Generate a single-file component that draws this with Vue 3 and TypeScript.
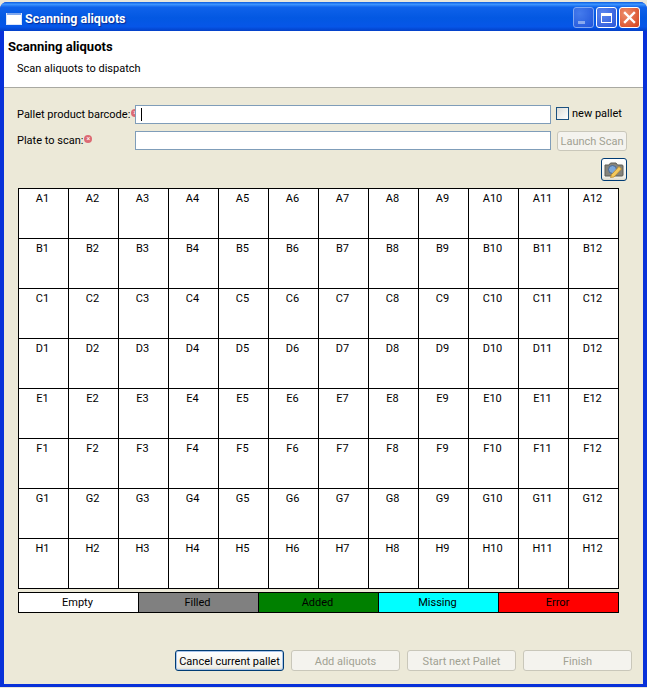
<script setup lang="ts">
const rows = ['A', 'B', 'C', 'D', 'E', 'F', 'G', 'H'];
const cols = [1, 2, 3, 4, 5, 6, 7, 8, 9, 10, 11, 12];
const wells = rows.flatMap((r) => cols.map((c) => `${r}${c}`));

const legend = [
  { label: 'Empty', color: '#ffffff' },
  { label: 'Filled', color: '#808080' },
  { label: 'Added', color: '#008000' },
  { label: 'Missing', color: '#00ffff' },
  { label: 'Error', color: '#ff0000' },
];
</script>

<template>
  <div class="window">
    <div class="titlebar">
      <svg class="app-icon" width="16" height="12" viewBox="0 0 16 12">
        <rect x="0.5" y="0.5" width="15" height="11" fill="#fff" stroke="#dbe6fa" />
        <rect x="1" y="0" width="14" height="2" fill="#7fa8ee" />
      </svg>
      <span class="title">Scanning aliquots</span>
      <div class="controls">
        <div class="ctl min"><span class="min-bar"></span></div>
        <div class="ctl max"><span class="max-box"></span></div>
        <div class="ctl close">
          <svg width="13" height="13" viewBox="0 0 13 13">
            <path d="M2 2 L11 11 M11 2 L2 11" stroke="#fff" stroke-width="2.4" stroke-linecap="square" />
          </svg>
        </div>
      </div>
    </div>

    <div class="body">
      <header class="banner">
        <h1>Scanning aliquots</h1>
        <p>Scan aliquots to dispatch</p>
      </header>

      <main class="content">
        <div class="form-row first">
          <label class="field-label">Pallet product barcode:<span class="req">×</span></label>
          <div class="input"><span class="caret"></span></div>
          <div class="check">
            <span class="box"></span>
            <span>new pallet</span>
          </div>
        </div>
        <div class="form-row second">
          <label class="field-label">Plate to scan:<span class="req">×</span></label>
          <div class="input"></div>
          <button class="btn launch" disabled>Launch Scan</button>
        </div>
        <div class="tool-row">
          <button class="btn tool">
            <svg width="20" height="18" viewBox="0 0 20 18">
              <path d="M1 4 H5 L6.5 2 H12 L13.5 4 H18 Q19 4 19 5 V14 Q19 15 18 15 H1 Z" fill="#85847c" stroke="#5f5e58" />
              <circle cx="8.5" cy="8.5" r="4" fill="#7ba6d8" stroke="#4a678f" />
              <path d="M6.5 16.5 L7.5 13.5 L15 5.5 L17.5 8 L10 16 Z" fill="#f4c95c" stroke="#b98a30" stroke-width="0.8" />
            </svg>
          </button>
        </div>

        <div class="plate">
          <div v-for="w in wells" :key="w" class="well">{{ w }}</div>
        </div>

        <div class="legend">
          <div
            v-for="item in legend"
            :key="item.label"
            class="legend-item"
            :style="{ background: item.color }"
          >
            {{ item.label }}
          </div>
        </div>

        <div class="actions">
          <button class="btn action default">Cancel current pallet</button>
          <button class="btn action" disabled>Add aliquots</button>
          <button class="btn action" disabled>Start next Pallet</button>
          <button class="btn action" disabled>Finish</button>
        </div>
      </main>
    </div>
  </div>
</template>

<style>
html,
body {
  margin: 0;
  background: #e8e6da;
}
</style>

<style scoped>
.window {
  width: 647px;
  height: 685px;
  margin-top: 2px;
  box-sizing: border-box;
  display: flex;
  flex-direction: column;
  background: #0831d9;
  border-radius: 7px 7px 0 0;
  font-family: Roboto, "Noto Sans", sans-serif;
  font-size: 11px;
  color: #000;
  overflow: hidden;
}

.titlebar {
  height: 29px;
  flex: none;
  box-sizing: border-box;
  display: flex;
  align-items: center;
  padding: 2px 7px 0 6px;
  background: linear-gradient(180deg, #0a5be0 0%, #3d95ff 8%, #0f62ea 18%, #0358e2 55%, #0656e8 85%, #0340c8 100%);
}

.app-icon {
  margin-right: 3px;
  margin-top: 2px;
}

.title {
  color: #fff;
  font-weight: 700;
  font-size: 12.5px;
  margin-top: 1px;
  text-shadow: 1px 1px 1px #0a2a90;
}

.controls {
  margin-left: auto;
  display: flex;
  gap: 2px;
}

.ctl {
  width: 21px;
  height: 21px;
  box-sizing: border-box;
  border: 1px solid #fff;
  border-radius: 3px;
  display: flex;
  align-items: center;
  justify-content: center;
  background: radial-gradient(circle at 30% 30%, #5a86ee, #2a55d8);
  position: relative;
}

.ctl.min {
  opacity: 0.75;
  border-color: #a9c0f4;
}

.min-bar {
  position: absolute;
  left: 4px;
  bottom: 3px;
  width: 7px;
  height: 3px;
  background: #b6c4f2;
}

.max-box {
  width: 11px;
  height: 10px;
  box-sizing: border-box;
  border: 1px solid #fff;
  border-top-width: 3px;
}

.ctl.close {
  background: radial-gradient(circle at 30% 30%, #ee8f6c, #d5421e);
}

.body {
  flex: 1;
  margin: 0 4px 3px;
  display: flex;
  flex-direction: column;
  background: #ece9d8;
}

.banner {
  height: 57px;
  flex: none;
  box-sizing: border-box;
  background: #fff;
  border-bottom: 1px solid #a9a9a2;
  padding: 8px 0 0 4px;
}

.banner h1 {
  margin: 0;
  font-size: 13px;
  font-weight: 700;
  line-height: 15px;
}

.banner p {
  margin: 7px 0 0 9px;
  line-height: 15px;
}

.content {
  flex: 1;
  display: flex;
  flex-direction: column;
  padding: 17px 15px 0 14px;
}

.form-row {
  display: flex;
  align-items: flex-start;
}

.form-row.second {
  margin-top: 7px;
}

.field-label {
  width: 118px;
  margin-left: -1px;
  flex: none;
  white-space: nowrap;
  line-height: 19px;
}

.form-row.second .field-label {
  line-height: 20px;
}

.req {
  display: inline-block;
  width: 8px;
  height: 8px;
  margin-left: 1px;
  border-radius: 50%;
  background: #dc6a73;
  color: #fff;
  font-size: 7px;
  line-height: 8px;
  text-align: center;
  vertical-align: 3px;
}

.input {
  width: 416px;
  height: 19px;
  box-sizing: border-box;
  flex: none;
  background: #fff;
  border: 1px solid #7f9db9;
  display: flex;
  align-items: center;
  padding-left: 5px;
  position: relative;
}

.caret {
  width: 1px;
  height: 13px;
  background: #000;
}

.check {
  margin: 2px 0 0 5px;
  display: flex;
  align-items: center;
  gap: 3px;
  white-space: nowrap;
}

.box {
  width: 13px;
  height: 13px;
  box-sizing: border-box;
  border: 1px solid #1c5180;
  background: linear-gradient(135deg, #dcdcd7, #fff);
}

.btn {
  font: inherit;
  box-sizing: border-box;
  border: 1px solid #003c74;
  border-radius: 3px;
  background: linear-gradient(180deg, #fff, #f0f0ea 85%, #dcd8c8);
  color: #000;
  padding: 1px 0 0;
  white-space: nowrap;
}

.btn:disabled {
  border-color: #c9c7ba;
  background: #f4f3ee;
  color: #a1a192;
}

.launch {
  width: 70px;
  height: 20px;
  margin-left: 6px;
}

.tool-row {
  display: flex;
  justify-content: flex-end;
  margin: 7px 1px 0 0;
}

.tool {
  width: 26px;
  height: 23px;
  display: flex;
  align-items: center;
  justify-content: center;
}

.plate {
  margin-top: 7px;
  width: 601px;
  box-sizing: border-box;
  display: grid;
  grid-template-columns: repeat(12, 50px);
  grid-auto-rows: 50px;
  background: #fff;
  border-top: 1px solid #000;
  border-left: 1px solid #000;
}

.well {
  box-sizing: border-box;
  border-right: 1px solid #000;
  border-bottom: 1px solid #000;
  text-align: center;
  padding: 2px 2px 0 0;
  line-height: 15px;
}

.legend {
  margin-top: 3px;
  width: 601px;
  height: 21px;
  box-sizing: border-box;
  border: 1px solid #000;
  border-right: none;
  display: flex;
}

.legend-item {
  width: 120px;
  box-sizing: border-box;
  border-right: 1px solid #000;
  text-align: center;
  line-height: 19px;
  padding-right: 2px;
}

.actions {
  margin-top: 37px;
  margin-right: -4px;
  display: flex;
  justify-content: flex-end;
  gap: 7px;
}

.action {
  width: 109px;
  height: 21px;
}

.action.default {
  box-shadow: inset 0 0 0 1px #a9c4ea;
}
</style>
